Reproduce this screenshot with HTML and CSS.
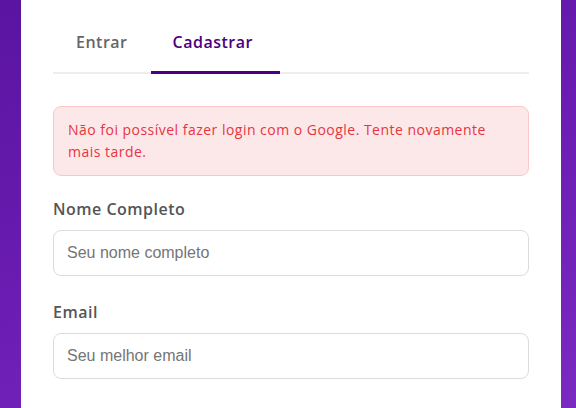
FILE: index.html
```html
<!DOCTYPE html>
<html lang="pt-BR">
<head>
<meta charset="utf-8">
<title>Cadastrar</title>
<link rel="stylesheet" href="styles.css">
</head>
<body>
<div class="page">
  <div class="card">
    <div class="tabs">
      <button class="tab">Entrar</button>
      <button class="tab active">Cadastrar</button>
    </div>
    <div class="alert">Não foi possível fazer login com o Google. Tente novamente mais tarde.</div>
    <form class="form">
      <div class="field">
        <label class="label" for="nome">Nome Completo</label>
        <input class="input" id="nome" type="text" placeholder="Seu nome completo">
      </div>
      <div class="field">
        <label class="label" for="email">Email</label>
        <input class="input" id="email" type="email" placeholder="Seu melhor email">
      </div>
    </form>
  </div>
</div>
</body>
</html>
```
FILE: styles.css
```css
html, body {
  margin: 0;
  height: 100%;
  overflow: hidden;
}
body {
  background: linear-gradient(160deg, #5a14a0 0%, #6b1cb2 50%, #7a2ac0 100%);
  font-family: "Open Sans", "Noto Sans", sans-serif;
}
.page {
  padding-left: 21px;
  padding-right: 15px;
  height: 100%;
}
.card {
  background: #fff;
  height: 100%;
  box-sizing: border-box;
  padding: 15px 32px 0 32px;
}
.tabs {
  display: flex;
  border-bottom: 2px solid #eeeeee;
}
.tab {
  background: none;
  border: none;
  border-bottom: 3px solid transparent;
  margin-bottom: -2px;
  padding: 15px 23px 17px;
  font-family: inherit;
  font-size: 16px;
  line-height: 24px;
  font-weight: 600;
  letter-spacing: 0.5px;
  color: #666;
  cursor: pointer;
}
.tab.active {
  padding-left: 22px;
  padding-right: 27px;
  color: #4b0082;
  border-bottom-color: #4b0082;
}
.alert {
  margin-top: 32px;
  background: #fde8e9;
  border: 1px solid #fbc6c8;
  border-radius: 8px;
  padding: 12px 14px;
  color: #e8343f;
  font-size: 14px;
  line-height: 22px;
  letter-spacing: 0.48px;
}
.form {
  display: flex;
  flex-direction: column;
  gap: 24px;
  margin-top: 21px;
}
.field {
  display: flex;
  flex-direction: column;
  gap: 9px;
}
.label {
  font-size: 16px;
  line-height: 24px;
  font-weight: 600;
  letter-spacing: 0.5px;
  color: #555;
}
.input {
  height: 46px;
  box-sizing: border-box;
  border: 1px solid #dcdcdc;
  border-radius: 8px;
  padding: 0 13px;
  font-family: "Liberation Sans", Arial, sans-serif;
  font-size: 16px;
  color: #333;
  outline: none;
}
.input::placeholder {
  color: #757575;
}
```
